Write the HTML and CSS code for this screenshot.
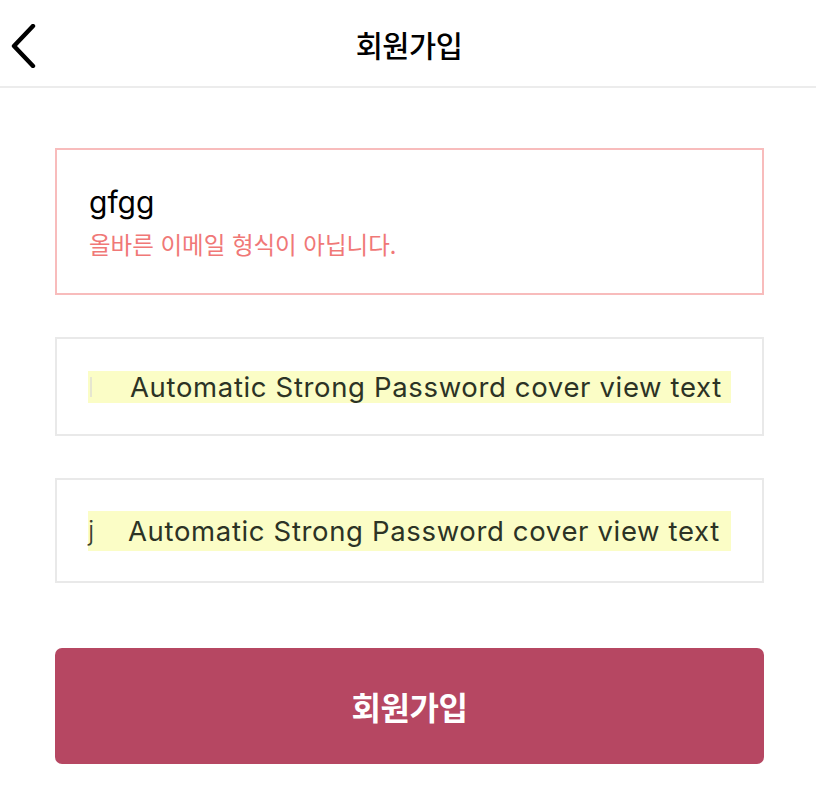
FILE: index.html
```html
<!DOCTYPE html>
<html lang="ko">
<head>
<meta charset="utf-8">
<title>회원가입</title>
<link rel="stylesheet" href="styles.css">
</head>
<body>
<header class="topbar">
  <button class="back" aria-label="뒤로">
    <svg width="28" height="44" viewBox="0 0 28 44"><path d="M24 2 L5 22 L24 42" fill="none" stroke="#000" stroke-width="4.4" stroke-linecap="round" stroke-linejoin="round"/></svg>
  </button>
  <h1 class="title">회원가입</h1>
</header>
<main class="form">
  <div class="field field-error">
    <div class="value">gfgg</div>
    <div class="error">올바른 이메일 형식이 아닙니다.</div>
  </div>
  <div class="field pw pw-1">
    <div class="pw-fill pw-fill-1">
      <span class="pw-lead caret"></span>
      <span class="pw-text">Automatic Strong Password cover view text</span>
    </div>
  </div>
  <div class="field pw pw-2">
    <div class="pw-fill pw-fill-2">
      <span class="pw-lead jchar">j</span>
      <span class="pw-text">Automatic Strong Password cover view text</span>
    </div>
  </div>
  <button class="submit">회원가입</button>
</main>
</body>
</html>
```

FILE: styles.css
```css
html, body {
  margin: 0;
  padding: 0;
  background: #fff;
}
body {
  font-family: Inter, "Noto Sans", "Noto Sans CJK KR", sans-serif;
  color: #000;
}
.topbar {
  height: 86px;
  border-bottom: 2px solid #ececec;
  display: flex;
  align-items: center;
  justify-content: center;
  position: relative;
}
.back {
  position: absolute;
  left: 9px;
  top: 24px;
  background: none;
  border: 0;
  padding: 0;
  width: 28px;
  height: 44px;
}
.back svg { display: block; }
.title {
  margin: 0;
  font-family: "Noto Sans CJK KR", sans-serif;
  font-size: 29.5px;
  font-weight: 500;
  letter-spacing: -0.5px;
  transform: translate(1px, 1px);
}
.form {
  display: flex;
  flex-direction: column;
  padding: 60px 52px 0 55px;
}
.field {
  border: 2px solid #e9e9e9;
  box-sizing: border-box;
}
.field-error {
  border-color: #f8bcbc;
  height: 147px;
  padding: 34px 32px 0 32px;
}
.value {
  font-family: Inter, "Noto Sans", sans-serif;
  font-size: 30px;
  line-height: 36px;
  color: #000;
}
.error {
  margin-top: 8px;
  font-family: "Noto Sans CJK KR", sans-serif;
  font-size: 23.5px;
  line-height: 32px;
  color: #f07877;
}
.pw {
  display: flex;
  align-items: center;
  padding: 0 31px;
}
.pw-1 { margin-top: 42px; height: 99px; }
.pw-2 { margin-top: 42px; height: 105px; }
.pw-fill {
  flex: 1;
  background: #fbfdc6;
  display: flex;
  align-items: center;
}
.pw-fill-1 { height: 32px; }
.pw-fill-2 { height: 40px; }
.pw-lead {
  width: 41px;
  flex: none;
}
.caret {
  height: 20px;
  border-left: 2px solid #e6e6d0;
  margin-left: 2px;
  width: 39px;
}
.jchar {
  font-size: 27px;
  font-weight: 300;
  color: #3a3f30;
  line-height: 1;
}
.pw-text {
  font-family: Inter, "Noto Sans", sans-serif;
  font-size: 27.5px;
  color: #2c3325;
  white-space: nowrap;
  letter-spacing: 0.65px;
  margin-left: -1px;
}
.submit {
  margin-top: 65px;
  height: 116px;
  border: 0;
  border-radius: 7px;
  background: #b64762;
  color: #fff;
  font-family: "Noto Sans CJK KR", sans-serif;
  font-size: 32px;
  font-weight: 700;
  letter-spacing: -0.5px;
}
```
